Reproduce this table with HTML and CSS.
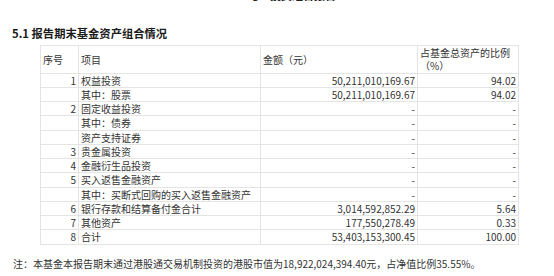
FILE: index.html
```html
<!DOCTYPE html>
<html lang="zh-CN">
<head>
<meta charset="utf-8">
<link rel="stylesheet" href="styles.css">
</head>
<body>
<div class="top-cut"><div class="top-cut-text">§5 投资组合报告</div></div>
<h2 class="title">5.1 报告期末基金资产组合情况</h2>
<table class="grid">
  <colgroup>
    <col class="c1"><col class="c2"><col class="c3"><col class="c4">
  </colgroup>
  <tr class="head">
    <td>序号</td>
    <td>项目</td>
    <td>金额（元）</td>
    <td>占基金总资产的比例（%）</td>
  </tr>
  <tr><td class="n">1</td><td>权益投资</td><td class="n">50,211,010,169.67</td><td class="n">94.02</td></tr>
  <tr><td class="n"></td><td>其中：股票</td><td class="n">50,211,010,169.67</td><td class="n">94.02</td></tr>
  <tr><td class="n">2</td><td>固定收益投资</td><td class="n">-</td><td class="n">-</td></tr>
  <tr><td class="n"></td><td>其中：债券</td><td class="n">-</td><td class="n">-</td></tr>
  <tr><td class="n"></td><td>资产支持证券</td><td class="n">-</td><td class="n">-</td></tr>
  <tr><td class="n">3</td><td>贵金属投资</td><td class="n">-</td><td class="n">-</td></tr>
  <tr><td class="n">4</td><td>金融衍生品投资</td><td class="n">-</td><td class="n">-</td></tr>
  <tr><td class="n">5</td><td>买入返售金融资产</td><td class="n">-</td><td class="n">-</td></tr>
  <tr><td class="n"></td><td>其中：买断式回购的买入返售金融资产</td><td class="n">-</td><td class="n">-</td></tr>
  <tr><td class="n">6</td><td>银行存款和结算备付金合计</td><td class="n">3,014,592,852.29</td><td class="n">5.64</td></tr>
  <tr><td class="n">7</td><td>其他资产</td><td class="n">177,550,278.49</td><td class="n">0.33</td></tr>
  <tr><td class="n">8</td><td>合计</td><td class="n">53,403,153,300.45</td><td class="n">100.00</td></tr>
</table>
<p class="note">注：本基金本报告期末通过港股通交易机制投资的港股市值为18,922,024,394.40元，占净值比例35.55%。</p>
</body>
</html>
```
FILE: styles.css
```css
html, body {
  margin: 0;
  padding: 0;
  background: #ffffff;
}
body {
  font-family: "Noto Sans CJK SC", "Microsoft YaHei", sans-serif;
  color: #333333;
}
.top-cut {
  height: 3px;
  overflow: hidden;
}
.top-cut-text {
  margin-top: -12px;
  padding-left: 250px;
  font-size: 11px;
  line-height: 14px;
  font-weight: bold;
  color: #222222;
}
.title {
  margin: 22px 0 0 0;
  padding-left: 12px;
  font-size: 11.3px;
  line-height: 16px;
  font-weight: bold;
  color: #1a1a1a;
}
.grid {
  margin: 4px 0 0 40px;
  border-collapse: collapse;
  table-layout: fixed;
  width: 478px;
}
.c1 { width: 38px; }
.c2 { width: 182px; }
.c3 { width: 157px; }
.c4 { width: 101px; }
.grid td {
  border: 1px solid #e4e4e4;
  padding: 0 2px;
  font-size: 10px;
  line-height: 13.25px;
  vertical-align: middle;
  white-space: nowrap;
  overflow: hidden;
}
.grid .head td {
  white-space: normal;
}
.grid td.n {
  text-align: right;
}
.note {
  margin: 12px 0 0 0;
  padding-left: 13px;
  font-size: 10px;
  line-height: 14px;
  color: #333333;
}
```
